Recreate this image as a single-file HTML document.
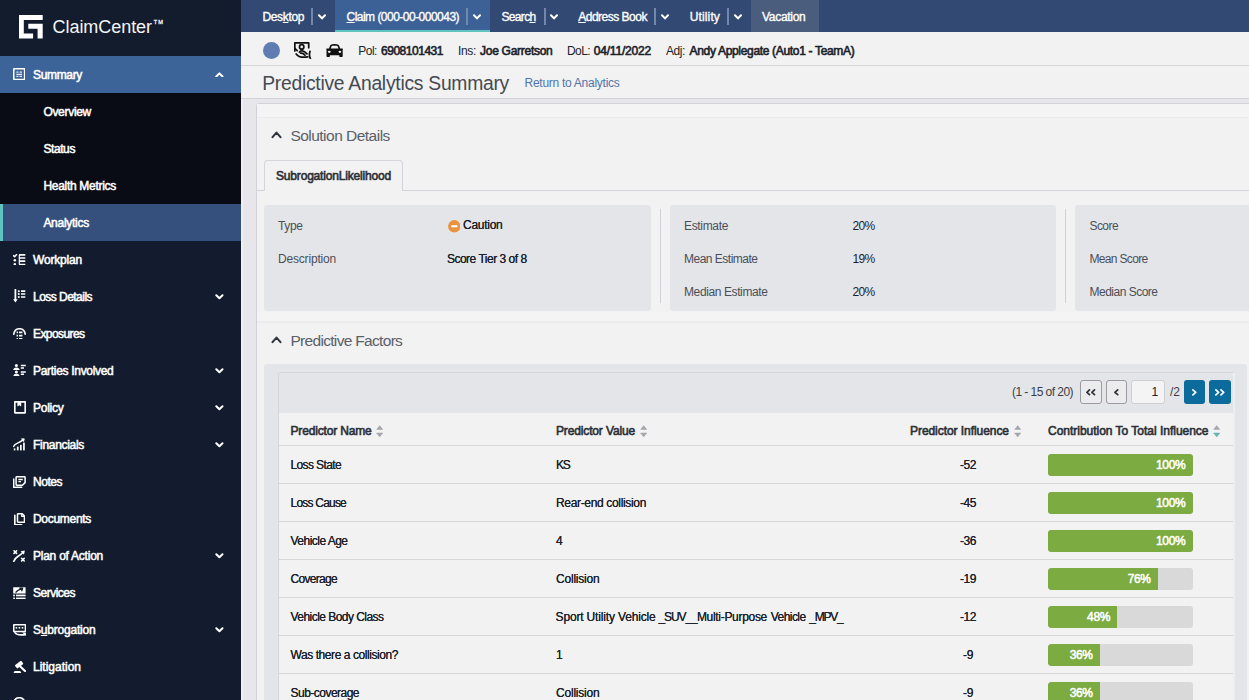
<!DOCTYPE html>
<html lang="en">
<head>
<meta charset="utf-8">
<title>Predictive Analytics Summary</title>
<style>
*{box-sizing:border-box;margin:0;padding:0}
html,body{width:1249px;height:700px;overflow:hidden;background:#e6e6eb;font-family:"Liberation Sans",sans-serif;color:#1f2733}
.abs{position:absolute}
.t{position:absolute;white-space:nowrap;line-height:1}
.t u{text-decoration-thickness:1px;text-underline-offset:0.5px}
#side{position:absolute;left:0;top:0;width:241px;height:700px;background:#121c2e;overflow:hidden}
#side .bg{position:absolute;left:0;width:241px}
#side svg.ic{position:absolute;left:13px;width:14px;height:14px}
#side svg.ch{position:absolute;left:214.5px;width:10px;height:7px}
#top{position:absolute;left:241px;top:0;width:1008px;height:32px;background:#324a73}
.sep{position:absolute;top:8.3px;width:2px;height:17px;background:#7287ac}
.tch{position:absolute;top:14px;width:8px;height:6px}
.ul{position:absolute;top:22.5px;height:1px;background:#fff}
#info{position:absolute;left:241px;top:32px;width:1008px;height:34px;background:#f2f2f2;border-bottom:1px solid #d7d7db}
#title{position:absolute;left:241px;top:66px;width:1008px;height:33px;background:#f2f2f2;border-bottom:1px solid #d3d3d9}
#panel{position:absolute;left:256px;top:103px;width:1010px;height:620px;background:#f2f2f2;border:1px solid #d2d2d8;border-radius:3px}
.card{position:absolute;top:205px;height:106px;background:#e4e5e9;border-radius:3px}
.vdiv{position:absolute;top:209px;width:1px;height:94px;background:#d0d0d6}
.bar{position:absolute;left:1047.5px;width:145px;height:22px;background:#d9d9d9;border-radius:3px;overflow:hidden}
.bar .fill{height:22px;background:#7cab42;border-radius:3px 0 0 3px}
.rowline{position:absolute;left:279px;width:954px;height:1px;background:#d6d6db}
.pbtn{position:absolute;top:380px;height:24px;border-radius:3px}
</style>
</head>
<body>
<div id="side">
  <div class="bg" style="top:0;height:56px;background:#131c2d"></div>
  <div class="bg" style="top:55.5px;height:37.5px;background:#3d6499"></div>
  <div class="bg" style="top:93px;height:111px;background:#090c14"></div>
  <div class="bg" style="top:204px;height:37px;background:#36507d;border-left:3px solid #5fc3c0"></div>
  <svg class="abs" style="left:19px;top:15.4px" width="23.7" height="23.5" viewBox="0 0 23.7 23.5"><path d="M0 0H23.7V5H4.8V18.6H14.1V23.5H0Z" fill="#fff"/><path d="M9.3 8.65H23.7V23.5H18.6V13.8H9.3Z" fill="#fff"/></svg>
<svg class="abs" style="left:13.0px;top:68.0px" width="12.4" height="12.2" viewBox="0 0 12.4 12.2" ><rect x="0.7" y="0.7" width="11" height="10.8" rx="0.8" fill="none" stroke="#fff" stroke-width="1.65"/><path d="M3.4 4.2H5.4M6.6 4.2H9M3.4 6.3H9M3.4 8.4H5.4M6.6 8.4H9" stroke="#e6ecf5" stroke-width="1.30" fill="none"/></svg>
<svg class="abs" style="left:13.4px;top:253.6px" width="12.6" height="11.8" viewBox="0 0 12.6 11.8" ><path d="M0.4 1.6L1.6 2.8L3.6 0.5" fill="none" stroke="#fff" stroke-width="1.42" stroke-linecap="round" stroke-linejoin="round"/><circle cx="1.8" cy="6.2" r="1.25" fill="#fff"/><circle cx="1.8" cy="10.3" r="1.25" fill="#fff"/><path d="M6 0.9H12.3M6 4H12.3M6 7.2H12.3M6 10.6H12.3" stroke="#fff" stroke-width="1.65" fill="none"/><path d="M6.3 0.9V10.6" stroke="#fff" stroke-width="1.18" fill="none"/></svg>
<svg class="abs" style="left:13.4px;top:289.0px" width="12.6" height="14.2" viewBox="0 0 12.6 14.2" ><path d="M2.4 0.6V11" stroke="#fff" stroke-width="1.77" fill="none" stroke-linecap="round"/><path d="M0.2 10.2H4.6L2.4 13.6Z" fill="#fff"/><circle cx="5.8" cy="2.2" r="1.05" fill="#fff"/><circle cx="5.8" cy="5" r="1.05" fill="#fff"/><circle cx="5.8" cy="8" r="1.05" fill="#fff"/><path d="M8 2.2H12.3M8 5H12.3M8 8H12.3" stroke="#fff" stroke-width="1.65" fill="none"/></svg>
<svg class="abs" style="left:13.0px;top:327.6px" width="13.0" height="11.8" viewBox="0 0 13.0 11.8" ><path d="M0.8 6.2C1.2 2.6 3.6 0.8 6.5 0.8C9.4 0.8 11.8 2.6 12.2 6.2" fill="none" stroke="#fff" stroke-width="1.65" stroke-linecap="round"/><path d="M3.6 4.4H5M6 4.4H9.4M3.6 7.6H5M6 7.6H9.4M3.6 10.8H5M6 10.8H9.4" stroke="#fff" stroke-width="1.65" fill="none"/></svg>
<svg class="abs" style="left:13.0px;top:363.6px" width="13.0" height="12.6" viewBox="0 0 13.0 12.6" ><circle cx="3.4" cy="1.6" r="1.5" fill="#fff"/><path d="M0.2 6Q0.4 3.4 3.4 3.4Q6.4 3.4 6.6 6Z" fill="#fff"/><circle cx="3.4" cy="7.9" r="1.5" fill="#fff"/><path d="M0.2 12.4Q0.4 9.7 3.4 9.7Q6.4 9.7 6.6 12.4Z" fill="#fff"/><path d="M7.8 1.6H12.8M7.8 4H11M7.8 7.9H12.8M7.8 10.3H11" stroke="#fff" stroke-width="1.53" fill="none"/></svg>
<svg class="abs" style="left:13.6px;top:401.2px" width="12.0" height="12.6" viewBox="0 0 12.0 12.6" ><rect x="0.75" y="0.75" width="10.5" height="11.1" rx="0.6" fill="none" stroke="#fff" stroke-width="1.77"/><path d="M3.4 0.8H7.2V5.6L5.3 4.2L3.4 5.6Z" fill="#fff"/></svg>
<svg class="abs" style="left:13.4px;top:438.2px" width="12.2" height="13.0" viewBox="0 0 12.2 13.0" ><rect x="0.8" y="10.4" width="1.6" height="2" fill="#fff"/><rect x="3.9" y="8.6" width="1.7" height="3.8" fill="#fff"/><rect x="7" y="6.8" width="1.7" height="5.6" fill="#fff"/><rect x="10.1" y="4.6" width="1.7" height="7.8" fill="#fff"/><path d="M0.6 8.4C2.4 4.8 5.4 6 10.6 1.4" fill="none" stroke="#fff" stroke-width="1.53" stroke-linecap="round"/><path d="M7.8 0.6L11.6 0.4L11 4.2Z" fill="#fff"/></svg>
<svg class="abs" style="left:13.2px;top:475.6px" width="12.8" height="12.0" viewBox="0 0 12.8 12.0" ><path d="M3.8 0.7H11.4Q12.1 0.7 12.1 1.4V6.6L9.4 9.3H3.8Q3.1 9.3 3.1 8.6V1.4Q3.1 0.7 3.8 0.7Z" fill="none" stroke="#fff" stroke-width="1.53"/><path d="M5.4 3.5H9.8M5.4 5.6H8" stroke="#fff" stroke-width="1.30" fill="none"/><path d="M0.7 3V11.3H8.6" fill="none" stroke="#fff" stroke-width="1.53" stroke-linecap="round" stroke-linejoin="round"/></svg>
<svg class="abs" style="left:13.8px;top:512.8px" width="11.2" height="12.6" viewBox="0 0 11.2 12.6" ><path d="M4.2 0.7H8.2L10.5 3V8.6Q10.5 9.3 9.8 9.3H4.2Q3.5 9.3 3.5 8.6V1.4Q3.5 0.7 4.2 0.7Z" fill="none" stroke="#fff" stroke-width="1.53" stroke-linejoin="round"/><path d="M7.8 0.9V3.4H10.3" fill="none" stroke="#fff" stroke-width="1.30"/><path d="M0.8 2.4V11.2Q0.8 11.9 1.5 11.9H7.6" fill="none" stroke="#fff" stroke-width="1.65" stroke-linecap="round"/></svg>
<svg class="abs" style="left:13.2px;top:549.6px" width="12.6" height="12.2" viewBox="0 0 12.6 12.2" ><path d="M1 0.8L3.6 3.4M3.6 0.8L1 3.4M8.6 8.4L11.2 11M11.2 8.4L8.6 11" stroke="#fff" stroke-width="1.53" fill="none" stroke-linecap="round"/><path d="M0.8 11.4C1.6 6.6 5.4 7.4 10.4 2" fill="none" stroke="#fff" stroke-width="1.77" stroke-linecap="round"/><path d="M7.6 1.2L11.8 0.4L11 4.8Z" fill="#fff"/></svg>
<svg class="abs" style="left:13.2px;top:586.6px" width="12.8" height="12.6" viewBox="0 0 12.8 12.6" ><rect x="0.2" y="0.2" width="12.4" height="6.2" rx="0.5" fill="#fff"/><path d="M3 5.2C4.4 3 6.4 2.6 9 1.6M6.8 1.2L9.6 1.2L8.8 3.8" fill="none" stroke="#131c2d" stroke-width="1.30" stroke-linecap="round" stroke-linejoin="round"/><rect x="0.2" y="7.6" width="1.7" height="1.7" fill="#fff"/><rect x="3" y="7.6" width="9.6" height="1.7" fill="#fff"/><rect x="0.2" y="10.6" width="1.7" height="1.7" fill="#fff"/><rect x="3" y="10.6" width="9.6" height="1.7" fill="#fff"/></svg>
<svg class="abs" style="left:13.0px;top:624.0px" width="13.2" height="12.0" viewBox="0 0 13.2 12.0" ><rect x="0.7" y="0.7" width="11.8" height="6.8" rx="0.7" fill="none" stroke="#fff" stroke-width="1.65"/><rect x="2.6" y="3" width="1.6" height="1.6" fill="#fff"/><rect x="5.6" y="3" width="1.6" height="1.6" fill="#fff"/><rect x="8.7" y="3" width="1.6" height="1.6" fill="#fff"/><path d="M2 8.6C4 11.6 8 11.2 12.4 10.6" fill="none" stroke="#fff" stroke-width="1.65" stroke-linecap="round"/><path d="M9 8.6H12.8V11.6Z" fill="#fff"/></svg>
<svg class="abs" style="left:13.0px;top:660.8px" width="13.0" height="12.6" viewBox="0 0 13.0 12.6" ><g transform="rotate(-38 6 3.8)"><rect x="2.2" y="1.7" width="8" height="4" rx="0.7" fill="#fff"/></g><path d="M7 5.2L12 10" stroke="#fff" stroke-width="2.12" stroke-linecap="round" fill="none"/><path d="M0.3 12.4L1.6 9.9H7.2L8.5 12.4Z" fill="#fff"/></svg>
<svg class="abs" style="left:13.4px;top:696.9px" width="12.6" height="12.6" viewBox="0 0 12.6 12.6" ><circle cx="6.3" cy="6.3" r="5.6" fill="none" stroke="#fff" stroke-width="1.65"/></svg>
<svg class="abs" style="left:215.2px;top:71.8px" width="8.8" height="5.6" viewBox="0 0 8.8 5.6" ><path d="M1.3 4.5L4.4 1.4L7.5 4.5" fill="none" stroke="#fff" stroke-width="2" stroke-linecap="round" stroke-linejoin="round"/></svg>
<svg class="abs" style="left:215.2px;top:294.2px" width="8.8" height="5.6" viewBox="0 0 8.8 5.6" ><path d="M1.3 1.2L4.4 4.3L7.5 1.2" fill="none" stroke="#fff" stroke-width="2" stroke-linecap="round" stroke-linejoin="round"/></svg>
<svg class="abs" style="left:215.2px;top:368.2px" width="8.8" height="5.6" viewBox="0 0 8.8 5.6" ><path d="M1.3 1.2L4.4 4.3L7.5 1.2" fill="none" stroke="#fff" stroke-width="2" stroke-linecap="round" stroke-linejoin="round"/></svg>
<svg class="abs" style="left:215.2px;top:405.2px" width="8.8" height="5.6" viewBox="0 0 8.8 5.6" ><path d="M1.3 1.2L4.4 4.3L7.5 1.2" fill="none" stroke="#fff" stroke-width="2" stroke-linecap="round" stroke-linejoin="round"/></svg>
<svg class="abs" style="left:215.2px;top:442.2px" width="8.8" height="5.6" viewBox="0 0 8.8 5.6" ><path d="M1.3 1.2L4.4 4.3L7.5 1.2" fill="none" stroke="#fff" stroke-width="2" stroke-linecap="round" stroke-linejoin="round"/></svg>
<svg class="abs" style="left:215.2px;top:553.2px" width="8.8" height="5.6" viewBox="0 0 8.8 5.6" ><path d="M1.3 1.2L4.4 4.3L7.5 1.2" fill="none" stroke="#fff" stroke-width="2" stroke-linecap="round" stroke-linejoin="round"/></svg>
<svg class="abs" style="left:215.2px;top:627.2px" width="8.8" height="5.6" viewBox="0 0 8.8 5.6" ><path d="M1.3 1.2L4.4 4.3L7.5 1.2" fill="none" stroke="#fff" stroke-width="2" stroke-linecap="round" stroke-linejoin="round"/></svg>
<div class="t" style="left:52.60px;top:17.66px;font-size:18px;font-weight:400;color:#f4f6f9;letter-spacing:-0.057px;">ClaimCenter</div>
<div class="t" style="left:153.80px;top:20.16px;font-size:5.6px;font-weight:400;color:#f4f6f9;letter-spacing:1.011px;-webkit-text-stroke:0.3px #f4f6f9">TM</div>
<div class="t" style="left:33.00px;top:68.84px;font-size:12px;font-weight:400;color:#ffffff;letter-spacing:-0.335px;;-webkit-text-stroke:0.5px #ffffff">Summary</div>
<div class="t" style="left:43.40px;top:105.84px;font-size:12px;font-weight:400;color:#ffffff;letter-spacing:-0.302px;;-webkit-text-stroke:0.5px #ffffff">Overview</div>
<div class="t" style="left:43.40px;top:142.84px;font-size:12px;font-weight:400;color:#ffffff;letter-spacing:-0.405px;;-webkit-text-stroke:0.5px #ffffff">Status</div>
<div class="t" style="left:43.40px;top:179.84px;font-size:12px;font-weight:400;color:#ffffff;letter-spacing:-0.292px;;-webkit-text-stroke:0.5px #ffffff">Health Metrics</div>
<div class="t" style="left:43.40px;top:216.84px;font-size:12px;font-weight:400;color:#ffffff;letter-spacing:-0.270px;;-webkit-text-stroke:0.5px #ffffff">Analytics</div>
<div class="t" style="left:33.00px;top:253.84px;font-size:12px;font-weight:400;color:#ffffff;letter-spacing:-0.184px;;-webkit-text-stroke:0.5px #ffffff">Workplan</div>
<div class="t" style="left:33.00px;top:290.84px;font-size:12px;font-weight:400;color:#ffffff;letter-spacing:-0.531px;;-webkit-text-stroke:0.5px #ffffff">Loss Details</div>
<div class="t" style="left:33.00px;top:327.84px;font-size:12px;font-weight:400;color:#ffffff;letter-spacing:-0.578px;;-webkit-text-stroke:0.5px #ffffff">Exposures</div>
<div class="t" style="left:33.00px;top:364.84px;font-size:12px;font-weight:400;color:#ffffff;letter-spacing:-0.306px;;-webkit-text-stroke:0.5px #ffffff">Parties Involved</div>
<div class="t" style="left:33.00px;top:401.84px;font-size:12px;font-weight:400;color:#ffffff;letter-spacing:-0.253px;;-webkit-text-stroke:0.5px #ffffff">Policy</div>
<div class="t" style="left:33.00px;top:438.84px;font-size:12px;font-weight:400;color:#ffffff;letter-spacing:-0.303px;;-webkit-text-stroke:0.5px #ffffff">Financials</div>
<div class="t" style="left:33.00px;top:475.84px;font-size:12px;font-weight:400;color:#ffffff;letter-spacing:-0.472px;;-webkit-text-stroke:0.5px #ffffff">Notes</div>
<div class="t" style="left:33.00px;top:512.84px;font-size:12px;font-weight:400;color:#ffffff;letter-spacing:-0.300px;;-webkit-text-stroke:0.5px #ffffff">Documents</div>
<div class="t" style="left:33.00px;top:549.84px;font-size:12px;font-weight:400;color:#ffffff;letter-spacing:-0.242px;;-webkit-text-stroke:0.5px #ffffff">Plan of Action</div>
<div class="t" style="left:33.00px;top:586.84px;font-size:12px;font-weight:400;color:#ffffff;letter-spacing:-0.502px;;-webkit-text-stroke:0.5px #ffffff">Services</div>
<div class="t" style="left:33.00px;top:623.84px;font-size:12px;font-weight:400;color:#ffffff;letter-spacing:-0.202px;;-webkit-text-stroke:0.5px #ffffff">S<u>u</u>brogation</div>
<div class="t" style="left:33.00px;top:660.84px;font-size:12px;font-weight:400;color:#ffffff;letter-spacing:-0.005px;;-webkit-text-stroke:0.5px #ffffff">Litigation</div>
</div>
<div id="top">
  <div class="abs" style="left:93.5px;top:0;width:155px;height:32px;background:#3c6196;border-bottom:2.5px solid #5fc3c0"></div>
  <div class="abs" style="left:509.5px;top:0;width:68px;height:32px;background:#4b5d7c"></div>
</div>
<div id="info"></div>
<div id="title"></div>
<div id="panel"></div>
<div class="abs" style="left:257px;top:104px;width:992px;height:12.5px;background:#f4f4f5"></div>
<div class="abs" style="left:257px;top:116.5px;width:992px;height:1.5px;background:#ebebee"></div>
<div class="abs" style="left:241px;top:99px;width:2px;height:601px;background:#efeff2"></div>
<!-- tab -->
<div class="abs" style="left:257px;top:190px;width:992px;height:1px;background:#d2d2d8"></div>
<div class="abs" style="left:264px;top:160px;width:138.7px;height:31px;background:#f2f2f2;border:1px solid #d4d4da;border-bottom:none;border-radius:4px 4px 0 0"></div>
<!-- cards -->
<div class="card" style="left:264px;width:386.5px"></div>
<div class="vdiv" style="left:660px"></div>
<div class="card" style="left:669.5px;width:386.5px"></div>
<div class="vdiv" style="left:1065px"></div>
<div class="card" style="left:1075px;width:200px"></div>
<svg class="abs" style="left:447.5px;top:220px" width="12.6" height="12.6" viewBox="0 0 12.6 12.6"><circle cx="6.3" cy="6.3" r="6.2" fill="#e9933f"/><rect x="3.1" y="5.35" width="6.4" height="1.9" rx="0.6" fill="#fff"/></svg>
<div class="abs" style="left:257px;top:312px;width:992px;height:9px;background:#f4f4f5"></div>
<div class="abs" style="left:257px;top:321px;width:992px;height:1.5px;background:#ebebee"></div>
<!-- factors -->
<div class="abs" style="left:264px;top:364px;width:982.5px;height:360px;background:#e4e5e9;border-radius:3px"></div>
<div class="abs" style="left:278px;top:372px;width:957px;height:340px;background:#f2f2f2;border:1px solid #d5d5da;border-right:2px solid #eeeef1;border-radius:3px"></div>
<div class="abs" style="left:279px;top:373px;width:954px;height:39.5px;background:#e4e5e9;border-radius:2px 2px 0 0"></div>
<div class="rowline" style="top:445px"></div>
<div class="rowline" style="top:483px"></div>
<div class="rowline" style="top:521px"></div>
<div class="rowline" style="top:559px"></div>
<div class="rowline" style="top:597px"></div>
<div class="rowline" style="top:635px"></div>
<div class="rowline" style="top:673px"></div>
<div class="bar" style="top:454px"><div class="fill" style="width:145.0px;border-radius:2px"></div></div>
<div class="bar" style="top:492px"><div class="fill" style="width:145.0px;border-radius:2px"></div></div>
<div class="bar" style="top:530px"><div class="fill" style="width:145.0px;border-radius:2px"></div></div>
<div class="bar" style="top:568px"><div class="fill" style="width:110.2px"></div></div>
<div class="bar" style="top:606px"><div class="fill" style="width:69.6px"></div></div>
<div class="bar" style="top:644px"><div class="fill" style="width:52.2px"></div></div>
<div class="bar" style="top:682px"><div class="fill" style="width:52.2px"></div></div>
<div class="pbtn" style="left:1080px;width:21.5px;background:#ececef;border:1px solid #9a9a9f"></div>
<div class="pbtn" style="left:1105.7px;width:21.5px;background:#ececef;border:1px solid #9a9a9f"></div>
<div class="pbtn" style="left:1131.3px;width:33.7px;background:#f4f4f5;border:1px solid #cfcfd4"></div>
<div class="pbtn" style="left:1183.5px;width:21.5px;background:#0b6b9d"></div>
<div class="pbtn" style="left:1209.2px;width:21.5px;background:#0b6b9d"></div>
<svg class="abs" style="left:1086.4px;top:389.0px" width="9.4" height="6.6" viewBox="0 0 9.4 6.6"><path d="M3.50 0.9L0.90 3.30L3.50 5.70M8.50 0.9L5.90 3.30L8.50 5.70" fill="none" stroke="#2c3138" stroke-width="1.7" stroke-linecap="round" stroke-linejoin="round"/></svg>
<svg class="abs" style="left:1114.2px;top:389.0px" width="4.6" height="6.6" viewBox="0 0 4.6 6.6"><path d="M3.70 0.9L0.90 3.30L3.70 5.70" fill="none" stroke="#2c3138" stroke-width="1.7" stroke-linecap="round" stroke-linejoin="round"/></svg>
<svg class="abs" style="left:1192.2px;top:389.0px" width="4.6" height="6.8" viewBox="0 0 4.6 6.8"><path d="M0.90 0.9L3.70 3.40L0.90 5.90" fill="none" stroke="#fff" stroke-width="1.7" stroke-linecap="round" stroke-linejoin="round"/></svg>
<svg class="abs" style="left:1215.4px;top:389.0px" width="9.6" height="6.8" viewBox="0 0 9.6 6.8"><path d="M0.90 0.9L3.60 3.40L0.90 5.90M6.00 0.9L8.70 3.40L6.00 5.90" fill="none" stroke="#fff" stroke-width="1.7" stroke-linecap="round" stroke-linejoin="round"/></svg>
<div class="sep" style="left:311.2px"></div>
<div class="sep" style="left:466.0px"></div>
<div class="sep" style="left:543.5px"></div>
<div class="sep" style="left:654.0px"></div>
<div class="sep" style="left:727.2px"></div>
<svg class="tch" style="left:317.8px" viewBox="0 0 8 6"><path d="M1 1.2L4 4.4L7 1.2" fill="none" stroke="#fff" stroke-width="2" stroke-linecap="round" stroke-linejoin="round"/></svg>
<svg class="tch" style="left:473.1px" viewBox="0 0 8 6"><path d="M1 1.2L4 4.4L7 1.2" fill="none" stroke="#fff" stroke-width="2" stroke-linecap="round" stroke-linejoin="round"/></svg>
<svg class="tch" style="left:550.0px" viewBox="0 0 8 6"><path d="M1 1.2L4 4.4L7 1.2" fill="none" stroke="#fff" stroke-width="2" stroke-linecap="round" stroke-linejoin="round"/></svg>
<svg class="tch" style="left:660.6px" viewBox="0 0 8 6"><path d="M1 1.2L4 4.4L7 1.2" fill="none" stroke="#fff" stroke-width="2" stroke-linecap="round" stroke-linejoin="round"/></svg>
<svg class="tch" style="left:733.6px" viewBox="0 0 8 6"><path d="M1 1.2L4 4.4L7 1.2" fill="none" stroke="#fff" stroke-width="2" stroke-linecap="round" stroke-linejoin="round"/></svg>
<div class="abs" style="left:262.8px;top:41.5px;width:17.3px;height:17.3px;border-radius:50%;background:#5f7db3"></div>
<svg class="abs" style="left:294.2px;top:41.6px" width="17.4" height="17.2" viewBox="0 0 17.4 17.2" fill="none" stroke="#111" stroke-width="1.75" stroke-linecap="round" stroke-linejoin="round"><path d="M0.8 9V0.9H14.7V5.8"/><path d="M0.8 6.5L3.2 8.6"/><circle cx="7.7" cy="4.9" r="2.2"/><path d="M5.4 10.2C6.5 8.2 9.5 8.2 13 11.8"/><path d="M6.6 11.2C8.5 11 10 11.8 11 13.2"/><path d="M2.2 12C4.5 15.4 9.5 15.6 13.8 14.9"/><path d="M16 9.3C15.2 12 15.4 14.8 16.4 16.6"/></svg>
<svg class="abs" style="left:326.3px;top:44px" width="17.2" height="12.9" viewBox="0 0 17.2 12.9"><path d="M3 4.6L4.1 1.6Q4.6 0.3 6.2 0.15Q8.6 -0.1 11 0.15Q12.6 0.3 13.1 1.6L14.2 4.6H16.4Q17.2 4.6 17 5.3L16.6 6Q16.7 6.3 16.7 6.8V12.2Q16.7 12.9 16 12.9H14Q13.3 12.9 13.3 12.2V11.2H3.9V12.2Q3.9 12.9 3.2 12.9H1.2Q0.5 12.9 0.5 12.2V6.8Q0.5 6.3 0.6 6L0.2 5.3Q0 4.6 0.8 4.6Z" fill="#111"/><path d="M4.7 4.4L5.5 2.5Q5.8 1.9 6.6 1.8Q8.6 1.6 10.6 1.8Q11.4 1.9 11.7 2.5L12.5 4.4Z" fill="#f2f2f2"/><ellipse cx="3.3" cy="7.8" rx="1.4" ry="1.15" fill="#f2f2f2"/><ellipse cx="13.9" cy="7.8" rx="1.4" ry="1.15" fill="#f2f2f2"/></svg>
<svg class="abs" style="left:270.6px;top:130.3px" width="11" height="9" viewBox="0 0 11 9"><path d="M1.5 7.1L5.5 2.6L9.5 7.1" fill="none" stroke="#30353d" stroke-width="2.1" stroke-linecap="round" stroke-linejoin="round"/></svg>
<svg class="abs" style="left:270.6px;top:335.3px" width="11" height="9" viewBox="0 0 11 9"><path d="M1.5 7.1L5.5 2.6L9.5 7.1" fill="none" stroke="#30353d" stroke-width="2.1" stroke-linecap="round" stroke-linejoin="round"/></svg>
<svg class="abs" style="left:376.2px;top:425px" width="7.4" height="12.6" viewBox="0 0 7.4 12.6"><path d="M3.7 0.3L6.9 4.3Q7.1 4.8 6.5 4.8H0.9Q0.3 4.8 0.5 4.3Z" fill="#a6a6ad"/><path d="M3.7 12.3L6.9 8.3Q7.1 7.8 6.5 7.8H0.9Q0.3 7.8 0.5 8.3Z" fill="#a6a6ad"/></svg>
<svg class="abs" style="left:640.2px;top:425px" width="7.4" height="12.6" viewBox="0 0 7.4 12.6"><path d="M3.7 0.3L6.9 4.3Q7.1 4.8 6.5 4.8H0.9Q0.3 4.8 0.5 4.3Z" fill="#a6a6ad"/><path d="M3.7 12.3L6.9 8.3Q7.1 7.8 6.5 7.8H0.9Q0.3 7.8 0.5 8.3Z" fill="#a6a6ad"/></svg>
<svg class="abs" style="left:1014.2px;top:425px" width="7.4" height="12.6" viewBox="0 0 7.4 12.6"><path d="M3.7 0.3L6.9 4.3Q7.1 4.8 6.5 4.8H0.9Q0.3 4.8 0.5 4.3Z" fill="#a6a6ad"/><path d="M3.7 12.3L6.9 8.3Q7.1 7.8 6.5 7.8H0.9Q0.3 7.8 0.5 8.3Z" fill="#a6a6ad"/></svg>
<svg class="abs" style="left:1213.2px;top:425px" width="7.4" height="12.6" viewBox="0 0 7.4 12.6"><path d="M3.7 0.3L6.9 4.3Q7.1 4.8 6.5 4.8H0.9Q0.3 4.8 0.5 4.3Z" fill="#a6a6ad"/><path d="M3.7 12.3L6.9 8.3Q7.1 7.8 6.5 7.8H0.9Q0.3 7.8 0.5 8.3Z" fill="#62b7b1"/></svg>
<div class="t" style="left:262.50px;top:10.64px;font-size:12px;font-weight:400;color:#ffffff;letter-spacing:-0.362px;-webkit-text-stroke:0.35px #fff">Des<u>k</u>top</div>
<div class="t" style="left:346.50px;top:10.64px;font-size:12px;font-weight:400;color:#ffffff;letter-spacing:-0.519px;-webkit-text-stroke:0.35px #fff"><u>C</u>laim (000-00-000043)</div>
<div class="t" style="left:501.50px;top:10.64px;font-size:12px;font-weight:400;color:#ffffff;letter-spacing:-0.672px;-webkit-text-stroke:0.35px #fff">Searc<u>h</u></div>
<div class="t" style="left:578.20px;top:10.64px;font-size:12px;font-weight:400;color:#ffffff;letter-spacing:-0.493px;-webkit-text-stroke:0.35px #fff"><u>A</u>ddress Book</div>
<div class="t" style="left:689.80px;top:10.64px;font-size:12px;font-weight:400;color:#ffffff;letter-spacing:0.122px;-webkit-text-stroke:0.35px #fff">Utility</div>
<div class="t" style="left:762.00px;top:10.64px;font-size:12px;font-weight:400;color:#ffffff;letter-spacing:-0.289px;-webkit-text-stroke:0.35px #fff">Vacation</div>
<div class="t" style="left:358.20px;top:45.14px;font-size:12px;font-weight:400;color:#1c222b;letter-spacing:-0.472px;">Pol:</div>
<div class="t" style="left:381.00px;top:45.14px;font-size:12px;font-weight:400;color:#1c222b;letter-spacing:-0.475px;;-webkit-text-stroke:0.6px #1c222b">6908101431</div>
<div class="t" style="left:458.00px;top:45.14px;font-size:12px;font-weight:400;color:#1c222b;letter-spacing:-0.336px;">Ins:</div>
<div class="t" style="left:480.00px;top:45.14px;font-size:12px;font-weight:400;color:#1c222b;letter-spacing:-0.273px;;-webkit-text-stroke:0.6px #1c222b">Joe Garretson</div>
<div class="t" style="left:567.00px;top:45.14px;font-size:12px;font-weight:400;color:#1c222b;letter-spacing:-0.590px;">DoL:</div>
<div class="t" style="left:593.70px;top:45.14px;font-size:12px;font-weight:400;color:#1c222b;letter-spacing:-0.187px;;-webkit-text-stroke:0.6px #1c222b">04/11/2022</div>
<div class="t" style="left:666.00px;top:45.14px;font-size:12px;font-weight:400;color:#1c222b;letter-spacing:-0.422px;">Adj:</div>
<div class="t" style="left:689.60px;top:45.14px;font-size:12px;font-weight:400;color:#1c222b;letter-spacing:-0.325px;;-webkit-text-stroke:0.6px #1c222b">Andy Applegate (Auto1 - TeamA)</div>
<div class="t" style="left:262.20px;top:73.86px;font-size:19.3px;font-weight:400;color:#454a52;letter-spacing:-0.255px;">Predictive Analytics Summary</div>
<div class="t" style="left:524.50px;top:77.04px;font-size:12px;font-weight:400;color:#5274a9;letter-spacing:-0.266px;">Return to Analytics</div>
<div class="t" style="left:290.40px;top:127.88px;font-size:15.5px;font-weight:400;color:#5a6068;letter-spacing:-0.519px;">Solution Details</div>
<div class="t" style="left:290.40px;top:332.88px;font-size:15.5px;font-weight:400;color:#5a6068;letter-spacing:-0.680px;">Predictive Factors</div>
<div class="t" style="left:276.00px;top:169.84px;font-size:12px;font-weight:400;color:#2a2f37;letter-spacing:-0.179px;;-webkit-text-stroke:0.6px #2a2f37">SubrogationLikelihood</div>
<div class="t" style="left:278.00px;top:219.84px;font-size:12px;font-weight:400;color:#4a4f57;letter-spacing:-0.379px;">Type</div>
<div class="t" style="left:278.00px;top:252.84px;font-size:12px;font-weight:400;color:#4a4f57;letter-spacing:-0.185px;">Description</div>
<div class="t" style="left:463.00px;top:219.24px;font-size:12px;font-weight:400;color:#1c222b;letter-spacing:-0.268px;text-shadow:0 0 0.4px #1c222b">Caution</div>
<div class="t" style="left:446.90px;top:252.94px;font-size:12px;font-weight:400;color:#1c222b;letter-spacing:-0.485px;text-shadow:0 0 0.4px #1c222b">Score Tier 3 of 8</div>
<div class="t" style="left:684.00px;top:219.84px;font-size:12px;font-weight:400;color:#4a4f57;letter-spacing:-0.336px;">Estimate</div>
<div class="t" style="left:684.00px;top:252.84px;font-size:12px;font-weight:400;color:#4a4f57;letter-spacing:-0.504px;">Mean Estimate</div>
<div class="t" style="left:684.00px;top:285.84px;font-size:12px;font-weight:400;color:#4a4f57;letter-spacing:-0.392px;">Median Estimate</div>
<div class="t" style="left:852.50px;top:219.84px;font-size:12px;font-weight:400;color:#1c222b;letter-spacing:-0.677px;">20%</div>
<div class="t" style="left:852.50px;top:252.84px;font-size:12px;font-weight:400;color:#1c222b;letter-spacing:-0.677px;">19%</div>
<div class="t" style="left:852.50px;top:285.84px;font-size:12px;font-weight:400;color:#1c222b;letter-spacing:-0.677px;">20%</div>
<div class="t" style="left:1089.50px;top:219.84px;font-size:12px;font-weight:400;color:#4a4f57;letter-spacing:-0.572px;">Score</div>
<div class="t" style="left:1089.50px;top:252.84px;font-size:12px;font-weight:400;color:#4a4f57;letter-spacing:-0.670px;">Mean Score</div>
<div class="t" style="left:1089.50px;top:285.84px;font-size:12px;font-weight:400;color:#4a4f57;letter-spacing:-0.504px;">Median Score</div>
<div class="t" style="left:1012.00px;top:386.34px;font-size:12px;font-weight:400;color:#3a3f47;letter-spacing:-0.550px;">(1 - 15 of 20)</div>
<div class="t" style="left:1151.50px;top:386.34px;font-size:12px;font-weight:400;color:#1c222b;letter-spacing:-1.188px;">1</div>
<div class="t" style="left:1170.00px;top:386.34px;font-size:12px;font-weight:400;color:#3a3f47;letter-spacing:-0.008px;">/2</div>
<div class="t" style="left:290.50px;top:425.34px;font-size:12px;font-weight:400;color:#2a2f37;letter-spacing:-0.170px;;-webkit-text-stroke:0.6px #2a2f37">Predictor Name</div>
<div class="t" style="left:556.00px;top:425.34px;font-size:12px;font-weight:400;color:#2a2f37;letter-spacing:-0.144px;;-webkit-text-stroke:0.6px #2a2f37">Predictor Value</div>
<div class="t" style="left:910.00px;top:425.34px;font-size:12px;font-weight:400;color:#2a2f37;letter-spacing:-0.056px;;-webkit-text-stroke:0.6px #2a2f37">Predictor Influence</div>
<div class="t" style="left:1048.00px;top:425.34px;font-size:12px;font-weight:400;color:#2a2f37;letter-spacing:-0.016px;;-webkit-text-stroke:0.6px #2a2f37">Contribution To Total Influence</div>
<div class="t" style="left:290.50px;top:459.34px;font-size:12px;font-weight:400;color:#1c222b;letter-spacing:-0.620px;text-shadow:0 0 0.4px #1c222b">Loss State</div>
<div class="t" style="left:556.00px;top:459.34px;font-size:12px;font-weight:400;color:#1c222b;letter-spacing:-1.258px;text-shadow:0 0 0.4px #1c222b">KS</div>
<div class="t" style="left:960.00px;top:459.34px;font-size:12px;font-weight:400;color:#1c222b;letter-spacing:-0.448px;text-shadow:0 0 0.4px #1c222b">-52</div>
<div class="t" style="left:1156.00px;top:459.34px;font-size:12px;font-weight:400;color:#ffffff;letter-spacing:-0.301px;;-webkit-text-stroke:0.5px #ffffff">100%</div>
<div class="t" style="left:290.50px;top:497.34px;font-size:12px;font-weight:400;color:#1c222b;letter-spacing:-0.787px;text-shadow:0 0 0.4px #1c222b">Loss Cause</div>
<div class="t" style="left:556.00px;top:497.34px;font-size:12px;font-weight:400;color:#1c222b;letter-spacing:-0.336px;text-shadow:0 0 0.4px #1c222b">Rear-end collision</div>
<div class="t" style="left:960.00px;top:497.34px;font-size:12px;font-weight:400;color:#1c222b;letter-spacing:-0.448px;text-shadow:0 0 0.4px #1c222b">-45</div>
<div class="t" style="left:1156.00px;top:497.34px;font-size:12px;font-weight:400;color:#ffffff;letter-spacing:-0.301px;;-webkit-text-stroke:0.5px #ffffff">100%</div>
<div class="t" style="left:290.50px;top:535.34px;font-size:12px;font-weight:400;color:#1c222b;letter-spacing:-0.520px;text-shadow:0 0 0.4px #1c222b">Vehicle Age</div>
<div class="t" style="left:556.00px;top:535.34px;font-size:12px;font-weight:400;color:#1c222b;letter-spacing:-0.688px;text-shadow:0 0 0.4px #1c222b">4</div>
<div class="t" style="left:960.00px;top:535.34px;font-size:12px;font-weight:400;color:#1c222b;letter-spacing:-0.448px;text-shadow:0 0 0.4px #1c222b">-36</div>
<div class="t" style="left:1156.00px;top:535.34px;font-size:12px;font-weight:400;color:#ffffff;letter-spacing:-0.301px;;-webkit-text-stroke:0.5px #ffffff">100%</div>
<div class="t" style="left:290.50px;top:573.34px;font-size:12px;font-weight:400;color:#1c222b;letter-spacing:-0.691px;text-shadow:0 0 0.4px #1c222b">Coverage</div>
<div class="t" style="left:556.00px;top:573.34px;font-size:12px;font-weight:400;color:#1c222b;letter-spacing:-0.207px;text-shadow:0 0 0.4px #1c222b">Collision</div>
<div class="t" style="left:960.00px;top:573.34px;font-size:12px;font-weight:400;color:#1c222b;letter-spacing:-0.448px;text-shadow:0 0 0.4px #1c222b">-19</div>
<div class="t" style="left:1127.70px;top:573.34px;font-size:12px;font-weight:400;color:#ffffff;letter-spacing:-0.344px;;-webkit-text-stroke:0.5px #ffffff">76%</div>
<div class="t" style="left:290.50px;top:611.34px;font-size:12px;font-weight:400;color:#1c222b;letter-spacing:-0.541px;text-shadow:0 0 0.4px #1c222b">Vehicle Body Class</div>
<div class="t" style="left:0;top:611.34px;font-size:12px;color:#1c222b;text-shadow:0 0 0.4px #1c222b"><span style="position:absolute;white-space:pre;left:555.60px;letter-spacing:-0.166px">Sport Utility Vehicle </span>
<span style="position:absolute;white-space:pre;left:658.40px;letter-spacing:-1.084px">_SUV__</span>
<span style="position:absolute;white-space:pre;left:696.90px;letter-spacing:-0.302px">Multi-Purpose </span>
<span style="position:absolute;white-space:pre;left:770.80px;letter-spacing:-0.558px">Vehicle </span>
<span style="position:absolute;white-space:pre;left:809.30px;letter-spacing:-1.272px">_MPV_</span></div>
<div class="t" style="left:960.00px;top:611.34px;font-size:12px;font-weight:400;color:#1c222b;letter-spacing:-0.448px;text-shadow:0 0 0.4px #1c222b">-12</div>
<div class="t" style="left:1087.10px;top:611.34px;font-size:12px;font-weight:400;color:#ffffff;letter-spacing:-0.344px;;-webkit-text-stroke:0.5px #ffffff">48%</div>
<div class="t" style="left:290.50px;top:649.34px;font-size:12px;font-weight:400;color:#1c222b;letter-spacing:-0.430px;text-shadow:0 0 0.4px #1c222b">Was there a collision?</div>
<div class="t" style="left:556.00px;top:649.34px;font-size:12px;font-weight:400;color:#1c222b;letter-spacing:-1.188px;text-shadow:0 0 0.4px #1c222b">1</div>
<div class="t" style="left:963.00px;top:649.34px;font-size:12px;font-weight:400;color:#1c222b;letter-spacing:-0.336px;text-shadow:0 0 0.4px #1c222b">-9</div>
<div class="t" style="left:1069.70px;top:649.34px;font-size:12px;font-weight:400;color:#ffffff;letter-spacing:-0.344px;;-webkit-text-stroke:0.5px #ffffff">36%</div>
<div class="t" style="left:290.50px;top:687.34px;font-size:12px;font-weight:400;color:#1c222b;letter-spacing:-0.518px;text-shadow:0 0 0.4px #1c222b">Sub-coverage</div>
<div class="t" style="left:556.00px;top:687.34px;font-size:12px;font-weight:400;color:#1c222b;letter-spacing:-0.207px;text-shadow:0 0 0.4px #1c222b">Collision</div>
<div class="t" style="left:963.00px;top:687.34px;font-size:12px;font-weight:400;color:#1c222b;letter-spacing:-0.336px;text-shadow:0 0 0.4px #1c222b">-9</div>
<div class="t" style="left:1069.70px;top:687.34px;font-size:12px;font-weight:400;color:#ffffff;letter-spacing:-0.344px;;-webkit-text-stroke:0.5px #ffffff">36%</div>
</body>
</html>
